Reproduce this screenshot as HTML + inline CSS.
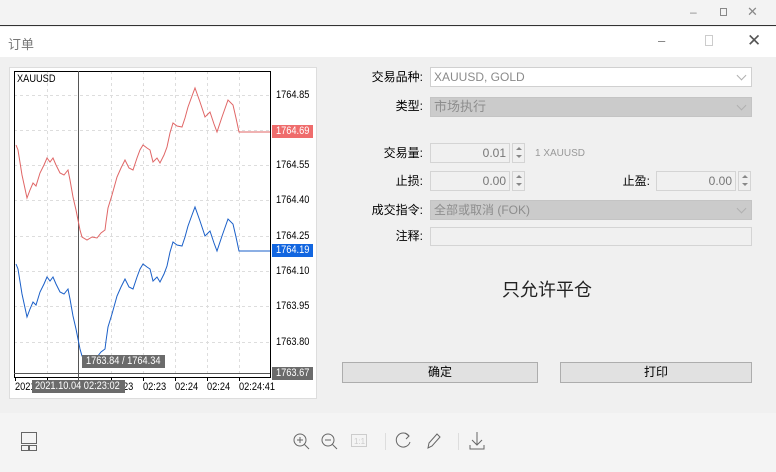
<!DOCTYPE html>
<html><head><meta charset="utf-8">
<style>
*{margin:0;padding:0;box-sizing:border-box}
body{width:776px;height:472px;overflow:hidden;background:#f0f0f0;font-family:"Liberation Sans","Noto Sans CJK SC",sans-serif;font-size:12px;color:#000;position:relative;white-space:nowrap}
.abs{position:absolute}
.lbl{position:absolute;text-align:right;font-size:12px;line-height:14px}
.inp{position:absolute;border:1px solid #d4d4d4;background:#f0f0f0;height:20px;color:#8a8a8a;font-size:12px;line-height:18px;padding:0 3px}
.gray{background:#cbcbcb;border-color:#c4c4c4}
.spin{position:absolute;width:13px;height:20px;border:1px solid #d4d4d4;background:#f0f0f0}
.spin:before{content:"";position:absolute;left:3px;top:3px;border:3px solid transparent;border-bottom:3px solid #888;border-top:0}
.spin:after{content:"";position:absolute;left:3px;top:11px;border:3px solid transparent;border-top:3px solid #888;border-bottom:0}
.chev{position:absolute;right:6px;top:4px;width:7px;height:7px;border-right:1px solid #b0b0b0;border-bottom:1px solid #b0b0b0;transform:rotate(45deg)}
.btn{position:absolute;height:21px;border:1px solid #adadad;background:#e1e1e1;text-align:center;line-height:19px;font-size:12px}
.yl{position:absolute;left:276px;font-size:11px;line-height:12px}
.xl{position:absolute;top:381px;font-size:11px;line-height:12px}
.n{display:inline-block;transform:scaleX(.84);transform-origin:left center}
.tag{position:absolute;height:13px;color:#fff;font-size:11px;line-height:13px;padding-left:4px;overflow:hidden}
</style></head><body>
<div class="abs" style="left:0;top:0;width:776px;height:26px;background:#f3f3f3;border-bottom:1px solid #333"></div>
<div class="abs" style="left:690px;top:5px;color:#888;font-size:12px">–</div>
<div class="abs" style="left:720px;top:8px;width:7px;height:8px;border:1px solid #888"></div>
<div class="abs" style="left:747px;top:4px;color:#888;font-size:13px">✕</div>
<div class="abs" style="left:0;top:27px;width:776px;height:30px;background:#fff"></div>
<div class="abs" style="left:8px;top:34px;color:#777;font-size:13px">订单</div>
<div class="abs" style="left:658px;top:33px;color:#777;font-size:13px">–</div>
<div class="abs" style="left:705px;top:35px;width:8px;height:11px;border:1px solid #ccc"></div>
<div class="abs" style="left:747px;top:31px;color:#555;font-size:17px">✕</div>
<div class="abs" style="left:0;top:413px;width:776px;height:59px;background:#f4f4f4"></div>

<div class="abs" style="left:9px;top:67px;width:308px;height:332px;background:#fff;border:1px solid #ddd"></div>
<svg class="abs" style="left:0;top:0" width="320" height="400">
<g stroke="#ddd" stroke-dasharray="3,3" stroke-width="1">
<line x1="47.5" y1="71" x2="47.5" y2="377"/><line x1="111.5" y1="71" x2="111.5" y2="377"/><line x1="143.5" y1="71" x2="143.5" y2="377"/><line x1="175.5" y1="71" x2="175.5" y2="377"/><line x1="207.5" y1="71" x2="207.5" y2="377"/><line x1="239.5" y1="71" x2="239.5" y2="377"/>
<line x1="14" y1="95.5" x2="270" y2="95.5"/><line x1="14" y1="130.5" x2="270" y2="130.5"/><line x1="14" y1="165.5" x2="270" y2="165.5"/><line x1="14" y1="200.5" x2="270" y2="200.5"/><line x1="14" y1="236.5" x2="270" y2="236.5"/><line x1="14" y1="271.5" x2="270" y2="271.5"/><line x1="14" y1="306.5" x2="270" y2="306.5"/><line x1="14" y1="342.5" x2="270" y2="342.5"/>
</g>
<rect x="14.5" y="71.5" width="256" height="306" fill="none" stroke="#000"/>
<line x1="14" y1="373.5" x2="270" y2="373.5" stroke="#555"/>
<line x1="78.5" y1="71" x2="78.5" y2="393" stroke="#555"/>
<polyline fill="none" stroke="#e06666" stroke-width="1" points="16,145 18,150 22,175 27,198 30,190 33,183 36,186 40,173 44,165 47,158 50,162 53,158 56,165 60,173 64,175 68,170 70,180 73,197 76,210 78,220 80,230 82,237 87,240 92,237 97,238 101,233 105,230 106,222 108,208 112,195 117,177 121,168 125,160 129,168 133,170 137,158 140,150 143,145 147,148 150,150 153,162 157,158 160,163 164,155 167,147 170,133 173,123 177,126 182,127 185,118 188,107 192,96 195,88 200,102 205,117 208,114 210,112 214,124 217,132 222,117 228,100 233,105 236,118 239,132 270,132"/>
<polyline fill="none" stroke="#1a5fc8" stroke-width="1" transform="translate(0,119)" points="16,145 18,150 22,175 27,198 30,190 33,183 36,186 40,173 44,165 47,158 50,162 53,158 56,165 60,173 64,175 68,170 70,180 73,197 76,210 78,220 80,230 82,237 87,240 92,237 97,238 101,233 105,230 106,222 108,208 112,195 117,177 121,168 125,160 129,168 133,170 137,158 140,150 143,145 147,148 150,150 153,162 157,158 160,163 164,155 167,147 170,133 173,123 177,126 182,127 185,118 188,107 192,96 195,88 200,102 205,117 208,114 210,112 214,124 217,132 222,117 228,100 233,105 236,118 239,132 270,132"/>
<g stroke="#000"><line x1="15.5" y1="378" x2="15.5" y2="381"/><line x1="47.5" y1="378" x2="47.5" y2="381"/><line x1="111.5" y1="378" x2="111.5" y2="381"/><line x1="143.5" y1="378" x2="143.5" y2="381"/><line x1="175.5" y1="378" x2="175.5" y2="381"/><line x1="207.5" y1="378" x2="207.5" y2="381"/><line x1="239.5" y1="378" x2="239.5" y2="381"/></g>
</svg>
<div class="abs" style="left:17px;top:73px;font-size:11px"><span class="n">XAUUSD</span></div>
<div class="yl" style="top:89px"><span class="n">1764.85</span></div>
<div class="tag" style="left:272px;top:125px;width:41px;background:#ef6c6c"><span class="n">1764.69</span></div>
<div class="yl" style="top:159px"><span class="n">1764.55</span></div>
<div class="yl" style="top:194px"><span class="n">1764.40</span></div>
<div class="yl" style="top:230px"><span class="n">1764.25</span></div>
<div class="tag" style="left:272px;top:244px;width:41px;background:#1266e0"><span class="n">1764.19</span></div>
<div class="yl" style="top:265px"><span class="n">1764.10</span></div>
<div class="yl" style="top:300px"><span class="n">1763.95</span></div>
<div class="yl" style="top:336px"><span class="n">1763.80</span></div>
<div class="tag" style="left:272px;top:367px;width:41px;background:#6b6b6b"><span class="n">1763.67</span></div>
<div class="tag" style="left:82px;top:355px;width:83px;background:#6b6b6b"><span class="n">1763.84 / 1764.34</span></div>
<div class="xl" style="left:15px"><span class="n">2021</span></div>
<div class="xl" style="left:123px"><span class="n">23</span></div>
<div class="xl" style="left:143px"><span class="n">02:23</span></div>
<div class="xl" style="left:175px"><span class="n">02:24</span></div>
<div class="xl" style="left:207px"><span class="n">02:24</span></div>
<div class="xl" style="left:239px"><span class="n">02:24:41</span></div>
<div class="tag" style="left:32px;top:380px;width:93px;background:#6b6b6b;padding-left:3px"><span class="n">2021.10.04 02:23:02</span></div>

<div class="lbl" style="left:340px;width:83px;top:70px">交易品种:</div>
<div class="inp" style="left:430px;top:67px;width:322px;background:#fff;border-color:#d0d0d0">XAUUSD, GOLD<span class="chev"></span></div>
<div class="lbl" style="left:340px;width:83px;top:99px">类型:</div>
<div class="inp gray" style="left:430px;top:97px;width:322px;color:#8d8d8d;font-size:13px">市场执行<span class="chev"></span></div>
<div class="lbl" style="left:340px;width:83px;top:146px">交易量:</div>
<div class="inp" style="left:430px;top:143px;width:80px;text-align:right;color:#777">0.01</div>
<div class="spin" style="left:512px;top:143px"></div>
<div class="abs" style="left:535px;top:148px;font-size:10px;color:#999">1 XAUUSD</div>
<div class="lbl" style="left:340px;width:83px;top:174px">止损:</div>
<div class="inp" style="left:430px;top:171px;width:80px;text-align:right;color:#777">0.00</div>
<div class="spin" style="left:512px;top:171px"></div>
<div class="lbl" style="left:600px;width:50px;top:174px">止盈:</div>
<div class="inp" style="left:656px;top:171px;width:80px;text-align:right;color:#777">0.00</div>
<div class="spin" style="left:738px;top:171px"></div>
<div class="lbl" style="left:340px;width:83px;top:203px">成交指令:</div>
<div class="inp gray" style="left:430px;top:200px;width:322px;color:#8d8d8d">全部或取消 (FOK)<span class="chev"></span></div>
<div class="lbl" style="left:340px;width:83px;top:229px">注释:</div>
<div class="inp" style="left:430px;top:227px;width:322px;height:19px"></div>
<div class="abs" style="left:447px;top:276px;width:200px;text-align:center;font-size:18px;color:#222">只允许平仓</div>
<div class="btn" style="left:342px;top:362px;width:196px">确定</div>
<div class="btn" style="left:560px;top:362px;width:192px">打印</div>

<svg class="abs" style="left:0;top:420px" width="776" height="40" fill="none" stroke="#666" stroke-width="1">
<rect x="21.5" y="12.5" width="15" height="11"/><rect x="21.5" y="25.5" width="7" height="5"/><rect x="29.5" y="25.5" width="7" height="5"/>
<circle cx="300" cy="20" r="6"/><line x1="304.5" y1="24.5" x2="309" y2="29"/><line x1="297" y1="20" x2="303" y2="20"/><line x1="300" y1="17" x2="300" y2="23"/>
<circle cx="328" cy="20" r="6"/><line x1="332.5" y1="24.5" x2="337" y2="29"/><line x1="325" y1="20" x2="331" y2="20"/>
<rect x="351.5" y="14.5" width="15" height="12" stroke="#ccc"/>
<text x="354" y="24" font-size="8" fill="#ccc" stroke="none" font-family="Liberation Sans">1:1</text>
<line x1="385.5" y1="13" x2="385.5" y2="30" stroke="#ddd"/>
<path d="M409 16 A7 7 0 1 0 410 22"/><path d="M405 13 L409 16 L406 19"/>
<path d="M428 28 L429 23 L437 14 L440 17 L432 26 Z"/>
<line x1="458.5" y1="13" x2="458.5" y2="30" stroke="#ddd"/>
<line x1="477" y1="12" x2="477" y2="25"/><path d="M472 20 L477 25 L482 20"/><path d="M470 25 V29 H484 V25"/>
</svg>
</body></html>
